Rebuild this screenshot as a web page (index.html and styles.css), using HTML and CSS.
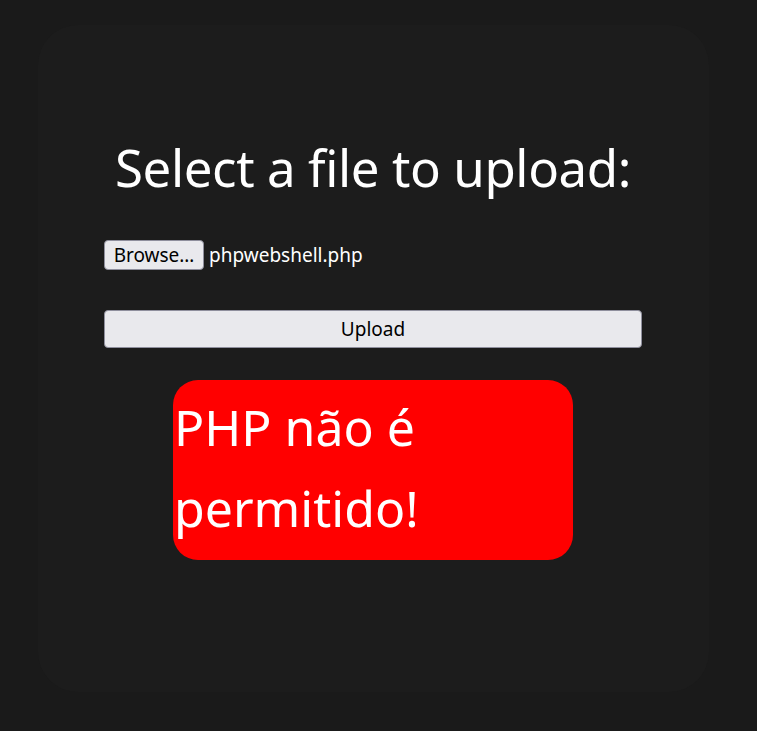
FILE: index.html
```html
<!DOCTYPE html>
<html>
<head>
<meta charset="utf-8">
<link rel="stylesheet" href="styles.css">
</head>
<body>
<div class="card">
  <h1 class="title">Select a file to upload:</h1>
  <form class="form">
    <div class="file-row">
      <span class="browse">Browse…</span>
      <span class="file-name">phpwebshell.php</span>
    </div>
    <button type="button" class="upload">Upload</button>
  </form>
  <div class="error">PHP não é permitido!</div>
</div>
</body>
</html>
```
FILE: styles.css
```css
html, body {
  margin: 0;
  padding: 0;
}
body {
  background: #1a1a1a;
  width: 757px;
  height: 731px;
  box-sizing: border-box;
  padding: 25px 48px 39px 38px;
  font-family: "Noto Sans", "DejaVu Sans", sans-serif;
  color: #fff;
}
.card {
  height: 667px;
  box-sizing: border-box;
  background: #1c1c1c;
  border-radius: 40px;
  padding: 0 67px 0 66px;
  display: flex;
  flex-direction: column;
}
.title {
  margin: 107px 0 0 0;
  font-size: 51px;
  font-weight: 400;
  line-height: 70px;
  text-align: center;
  letter-spacing: -0.4px;
}
.form {
  margin-top: 38px;
  display: flex;
  flex-direction: column;
}
.file-row {
  display: flex;
  align-items: center;
  height: 30px;
}
.browse {
  box-sizing: border-box;
  height: 30px;
  width: 100px;
  background: #e9e9ed;
  border: 1px solid #8f8f9d;
  border-radius: 4px;
  color: #000;
  font-size: 19px;
  line-height: 28px;
  text-align: center;
  white-space: nowrap;
}
.file-name {
  margin-left: 5px;
  font-size: 19px;
}
.upload {
  margin-top: 40px;
  height: 38px;
  width: 538px;
  background: #e9e9ed;
  border: 1px solid #8f8f9d;
  border-radius: 4px;
  color: #000;
  font-family: "Noto Sans", "DejaVu Sans", sans-serif;
  font-size: 19px;
  padding: 0;
}
.error {
  margin: 32px auto 0;
  width: 400px;
  height: 180px;
  box-sizing: border-box;
  background: #ff0000;
  border-radius: 25px;
  padding: 7px 0 0 1px;
  font-size: 50px;
  line-height: 81px;
  color: #fff;
}
```
